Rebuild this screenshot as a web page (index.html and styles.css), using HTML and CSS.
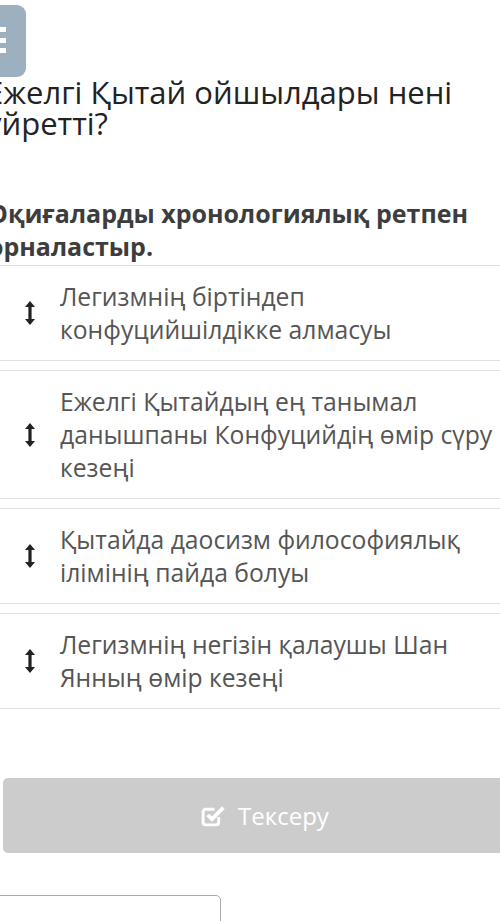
FILE: index.html
```html
<!DOCTYPE html>
<html lang="kk">
<head>
  <meta charset="UTF-8" />
  <meta name="viewport" content="width=device-width, initial-scale=1.0" />
  <title>Тапсырма</title>
  <link rel="stylesheet" href="styles.css">
</head>
<body>
  <div class="page">
    <div class="badge">
      <svg viewBox="0 0 30 28" width="30" height="28">
        <rect x="0" y="0" width="30" height="5" fill="#fff"/>
        <rect x="0" y="11" width="30" height="5" fill="#fff"/>
        <rect x="0" y="21" width="30" height="5" fill="#fff"/>
      </svg>
    </div>

    <h1 class="question">Ежелгі Қытай ойшылдары нені үйретті?</h1>
    <p class="task">Оқиғаларды хронологиялық ретпен орналастыр.</p>

    <ul class="order-list">
      <li class="order-item">
        <span class="handle"><svg viewBox="0 0 10 24" width="10" height="24"><path d="M5 0L10 6H6.6V18H10L5 24L0 18H3.4V6H0Z"/></svg></span>
        <span class="label">Легизмнің біртіндеп конфуцийшілдікке алмасуы</span>
      </li>
      <li class="order-item">
        <span class="handle"><svg viewBox="0 0 10 24" width="10" height="24"><path d="M5 0L10 6H6.6V18H10L5 24L0 18H3.4V6H0Z"/></svg></span>
        <span class="label">Ежелгі Қытайдың ең танымал данышпаны Конфуцийдің өмір сүру кезеңі</span>
      </li>
      <li class="order-item">
        <span class="handle"><svg viewBox="0 0 10 24" width="10" height="24"><path d="M5 0L10 6H6.6V18H10L5 24L0 18H3.4V6H0Z"/></svg></span>
        <span class="label">Қытайда даосизм философиялық ілімінің пайда болуы</span>
      </li>
      <li class="order-item">
        <span class="handle"><svg viewBox="0 0 10 24" width="10" height="24"><path d="M5 0L10 6H6.6V18H10L5 24L0 18H3.4V6H0Z"/></svg></span>
        <span class="label">Легизмнің негізін қалаушы Шан Янның өмір кезеңі</span>
      </li>
    </ul>

    <button class="check-btn" type="button" disabled>
      <svg viewBox="0 0 24 22" width="25" height="23">
        <path d="M17 12.5v5a2.5 2.5 0 0 1-2.5 2.5h-10A2.5 2.5 0 0 1 2 17.5v-10A2.5 2.5 0 0 1 4.5 5H13" fill="none" stroke="#fff" stroke-width="2.8"/>
        <path d="M6.5 10.5l4 4L21.5 3.5" fill="none" stroke="#fff" stroke-width="3.6"/>
      </svg>
      Тексеру
    </button>

    <div class="answer-box"></div>
  </div>
</body>
</html>
```

FILE: styles.css
```css
html, body {
  margin: 0;
  overflow: hidden;
  background: #fff;
}
.page {
  margin-left: -14px;
  width: 546px;
  font-family: "Open Sans", sans-serif;
}
.badge {
  margin-top: 5px;
  margin-left: -30px;
  width: 70px;
  height: 72px;
  border-radius: 9px;
  background-color: #9db0bf;
  display: flex;
  align-items: center;
  justify-content: center;
}
.question {
  margin: 0;
  font-size: 31px;
  line-height: 31px;
  font-weight: 400;
  color: #222;
  width: 520px;
}
.task {
  margin: 58px 0 2px 2px;
  font-size: 25px;
  line-height: 33px;
  font-weight: 700;
  color: #3d3d3d;
}
.order-list {
  list-style: none;
  margin: 0;
  padding: 0;
  display: flex;
  flex-direction: column;
  gap: 9px;
}
.order-item {
  display: flex;
  align-items: center;
  gap: 25px;
  padding: 14px 0 14px 39px;
  border-top: 1px solid #e0e0e0;
  border-bottom: 1px solid #e0e0e0;
}
.handle {
  display: flex;
  width: 10px;
  flex-shrink: 0;
}
.handle svg {
  fill: #222;
}
.label {
  font-size: 24.7px;
  line-height: 33px;
  color: #555;
  max-width: 450px;
}
.check-btn {
  display: flex;
  align-items: center;
  justify-content: center;
  gap: 12px;
  margin: 69px 0 0 17px;
  width: 524px;
  height: 75px;
  border: none;
  border-radius: 5px;
  background-color: #cccccc;
  color: #fff;
  font-family: "Open Sans", sans-serif;
  font-size: 24px;
}
.answer-box {
  margin-top: 42px;
  width: 233px;
  height: 60px;
  border: 1px solid #aaa;
  border-radius: 5px;
}
```
